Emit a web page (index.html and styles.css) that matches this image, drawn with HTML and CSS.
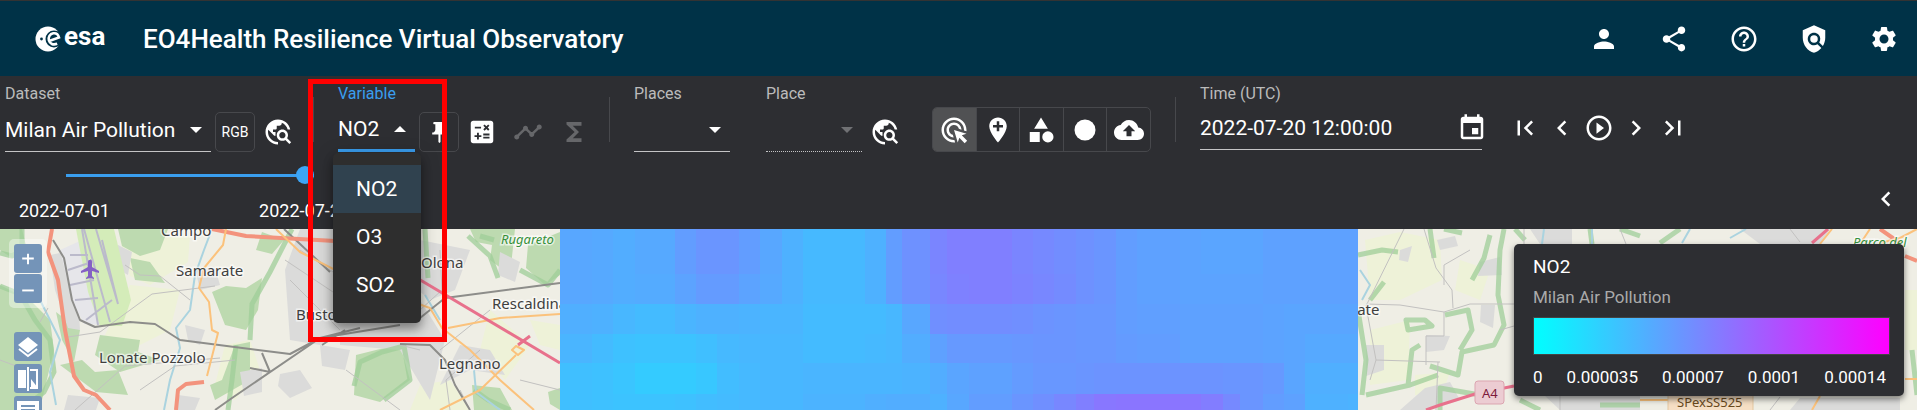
FILE: index.html
```html
<!DOCTYPE html>
<html lang="en">
<head>
  <meta charset="UTF-8" />
  <meta name="viewport" content="width=device-width, initial-scale=1.0"/>
  <title>EO4Health Resilience Virtual Observatory</title>
  <link rel="stylesheet" href="styles.css">
</head>
<body>
  <!-- icons -->
  <svg width="0" height="0" class="sprite" aria-hidden="true">
    <symbol id="i-globe" viewBox="0 0 24 24"><path d="M19.3 16.9c.4-.7.7-1.5.7-2.4 0-2.5-2-4.5-4.5-4.5S11 12 11 14.5s2 4.500 4.500 4.500c.9 0 1.700-.3 2.400-.7l3.200 3.200 1.400-1.400-3.200-3.200zm-3.800.1c-1.400 0-2.500-1.100-2.500-2.500s1.100-2.500 2.500-2.500 2.500 1.100 2.500 2.500-1.100 2.500-2.500 2.500zM12 20v2C6.480 22 2 17.520 2 12S6.480 2 12 2c4.840 0 8.870 3.440 9.800 8h-2.070c-.64-2.460-2.400-4.470-4.730-5.410V5c0 1.100-.9 2-2 2h-2v2c0 .55-.45 1-1 1H8v2h2v3H9l-4.790-4.790C4.080 10.790 4 11.380 4 12c0 4.410 3.590 8 8 8z"/></symbol>
    <symbol id="i-prev" viewBox="0 0 24 24"><path d="M15.410 7.410 14 6l-6 6 6 6 1.410-1.410L10.830 12z"/></symbol>
    <symbol id="i-next" viewBox="0 0 24 24"><path d="M10 6 8.590 7.410 13.170 12l-4.580 4.590L10 18l6-6z"/></symbol>
    <symbol id="i-first" viewBox="0 0 24 24"><path d="M18.410 16.590 13.820 12l4.590-4.590L17 6l-6 6 6 6zM6 6h2v12H6z"/></symbol>
    <symbol id="i-last" viewBox="0 0 24 24"><path d="M5.590 7.410 10.180 12l-4.590 4.590L7 18l6-6-6-6zM16 6h2v12h-2z"/></symbol>
  </svg>

  <header class="app-header">
    <svg class="logo" width="76" height="34" viewBox="0 -4 76 34" role="img" aria-label="esa">
      <circle cx="13" cy="13" r="12.500" fill="#fff"/>
      <circle cx="19" cy="13" r="8.500" fill="#003247"/>
      <path d="M13.500 15.200 24 11.500c-.8-3-3-4.700-5.800-4.200-3.400.6-5.200 3.900-4.300 7.200.9 3.400 4.200 4.700 8.300 3.300" fill="none" stroke="#fff" stroke-width="2.600"/>
      <circle cx="6.500" cy="13" r="1.400" fill="#003247"/>
      <text x="29" y="19" class="logo-text">esa</text>
    </svg>
    <h1>EO4Health Resilience Virtual Observatory</h1>
    <nav class="header-actions">
      <button aria-label="Account"><svg viewBox="0 0 24 24"><path d="M12 12c2.210 0 4-1.790 4-4s-1.790-4-4-4-4 1.790-4 4 1.790 4 4 4zm0 2c-2.670 0-8 1.340-8 4v2h16v-2c0-2.660-5.330-4-8-4z"/></svg></button>
      <button aria-label="Share"><svg viewBox="0 0 24 24"><path d="M18 16.080c-.76 0-1.440.3-1.960.77L8.910 12.700c.05-.23.090-.46.090-.7s-.04-.47-.09-.7l7.050-4.110c.54.5 1.250.81 2.040.81 1.660 0 3-1.340 3-3s-1.340-3-3-3-3 1.340-3 3c0 .24.040.47.090.7L8.040 9.810C7.500 9.310 6.790 9 6 9c-1.660 0-3 1.340-3 3s1.340 3 3 3c.79 0 1.500-.31 2.040-.81l7.120 4.160c-.05.21-.08.43-.08.650 0 1.610 1.310 2.920 2.920 2.920s2.920-1.310 2.920-2.920-1.310-2.920-2.920-2.920z"/></svg></button>
      <button aria-label="Help"><svg viewBox="0 0 24 24"><path d="M11 18h2v-2h-2v2zm1-16C6.480 2 2 6.480 2 12s4.480 10 10 10 10-4.480 10-10S17.520 2 12 2zm0 18c-4.410 0-8-3.590-8-8s3.590-8 8-8 8 3.590 8 8-3.590 8-8 8zm0-14c-2.210 0-4 1.790-4 4h2c0-1.100.9-2 2-2s2 .9 2 2c0 2-3 1.750-3 5h2c0-2.250 3-2.500 3-5 0-2.210-1.790-4-4-4z"/></svg></button>
      <button aria-label="Privacy"><svg viewBox="0 0 24 24"><path d="M21 5l-9-4-9 4v6c0 5.550 3.840 10.740 9 12 2.300-.56 4.330-1.900 5.880-3.710l-3.120-3.120c-1.940 1.290-4.580 1.070-6.290-.64-1.950-1.950-1.950-5.120 0-7.070 1.950-1.950 5.120-1.950 7.070 0 1.710 1.710 1.920 4.350.64 6.290l2.900 2.900C20.290 15.690 21 13.380 21 11V5z"/><circle cx="12" cy="12" r="3"/></svg></button>
      <button aria-label="Settings"><svg viewBox="0 0 24 24"><path d="M19.140 12.940c.04-.3.060-.61.060-.94 0-.32-.02-.64-.07-.94l2.030-1.580c.18-.14.230-.41.120-.61l-1.920-3.320c-.12-.22-.37-.29-.59-.22l-2.390.96c-.5-.38-1.030-.7-1.620-.94l-.36-2.540c-.04-.24-.24-.41-.48-.41h-3.840c-.24 0-.43.170-.47.410l-.36 2.540c-.59.240-1.130.570-1.620.940l-2.390-.96c-.22-.08-.47 0-.59.220L2.740 8.870c-.12.210-.08.470.12.610l2.030 1.580c-.05.300-.09.630-.09.940s.02.640.07.940l-2.030 1.580c-.18.140-.23.410-.12.610l1.920 3.320c.12.220.37.290.59.220l2.390-.96c.5.380 1.030.7 1.620.94l.36 2.540c.05.240.24.410.48.410h3.840c.24 0 .44-.17.47-.41l.36-2.540c.59-.24 1.130-.56 1.620-.94l2.390.96c.22.080.47 0 .59-.22l1.920-3.320c.12-.22.070-.47-.12-.61l-2.010-1.580zM12 15.600c-1.980 0-3.600-1.620-3.600-3.600s1.620-3.600 3.600-3.600 3.600 1.620 3.600 3.600-1.620 3.600-3.600 3.600z"/></svg></button>
    </nav>
  </header>

  <section class="controls">
    <div class="toolbar">
      <div class="field field-dataset">
        <label for="dataset">Dataset</label>
        <select id="dataset"><option>Milan Air Pollution</option></select>
      </div>
      <button class="framed">RGB</button>
      <button class="icon-btn" aria-label="Locate dataset"><svg><use href="#i-globe"/></svg></button>

      <span class="divider"></span>

      <div class="field field-variable">
        <label for="variable">Variable</label>
        <select id="variable"><option>NO2</option><option>O3</option><option>SO2</option></select>
        <ul class="menu" role="listbox" aria-label="Variable">
          <li role="option" aria-selected="true" class="selected">NO2</li>
          <li role="option" aria-selected="false">O3</li>
          <li role="option" aria-selected="false">SO2</li>
        </ul>
        <div class="highlight"></div>
      </div>
      <button class="framed" aria-label="Pin variable"><svg class="pin" viewBox="0 0 24 24"><path d="M16 9V4h1c.55 0 1-.45 1-1s-.45-1-1-1H7c-.55 0-1 .45-1 1s.45 1 1 1h1v5c0 1.660-1.340 3-3 3v2h5.970v7l1 1 1-1v-7H19v-2c-1.660 0-3-1.340-3-3z"/></svg></button>
      <button class="icon-btn" aria-label="Calculator"><svg viewBox="0 0 24 24"><path d="M19 3H5c-1.100 0-2 .9-2 2v14c0 1.100.9 2 2 2h14c1.100 0 2-.9 2-2V5c0-1.100-.9-2-2-2zm-5.970 4.060L14.090 6l1.410 1.410L16.910 6l1.060 1.060-1.410 1.410 1.410 1.410-1.060 1.060-1.410-1.400-1.410 1.410-1.060-1.060 1.410-1.410-1.410-1.420zM6.250 7.720h5v1.500h-5v-1.500zM11.500 16h-2v2H8v-2H6v-1.500h2v-2h1.500v2h2V16zm6.500 1.250h-5v-1.500h5v1.500zm0-2.500h-5v-1.500h5v1.500z"/></svg></button>
      <button class="icon-btn" aria-label="Time series" disabled><svg viewBox="0 0 24 24"><path d="M23 8c0 1.100-.9 2-2 2-.18 0-.35-.02-.51-.07l-3.560 3.550c.05.160.070.340.070.520 0 1.100-.9 2-2 2s-2-.9-2-2c0-.18.020-.36.070-.52l-2.550-2.550c-.16.050-.34.070-.52.070s-.36-.02-.52-.07l-4.550 4.560c.05.160.070.330.070.510 0 1.100-.9 2-2 2s-2-.9-2-2 .9-2 2-2c.18 0 .35.020.51.070l4.560-4.550C8.020 9.360 8 9.180 8 9c0-1.100.9-2 2-2s2 .9 2 2c0 .18-.02.360-.07.520l2.550 2.550c.16-.05.340-.07.520-.07s.36.020.52.070l3.550-3.560C19.020 8.350 19 8.180 19 8c0-1.100.9-2 2-2s2 .9 2 2z"/></svg></button>
      <button class="icon-btn" aria-label="Statistics" disabled><svg viewBox="0 0 24 24"><path d="M18 4H6v2l6.500 6L6 18v2h12v-3h-7l5-5-5-5h7z"/></svg></button>

      <span class="divider"></span>

      <div class="field field-place">
        <label for="places">Places</label>
        <select id="places"><option></option></select>
      </div>
      <div class="field field-place field-second">
        <label for="place">Place</label>
        <select id="place" disabled><option></option></select>
      </div>
      <button class="icon-btn" aria-label="Locate place"><svg><use href="#i-globe"/></svg></button>

      <div class="toggle-group">
        <button class="active" aria-label="Select"><svg viewBox="0 0 24 24"><path d="M11.710 17.990C8.530 17.840 6 15.220 6 12c0-3.310 2.690-6 6-6 3.220 0 5.840 2.530 5.990 5.710l-2.100-.63C15.480 9.310 13.890 8 12 8c-2.210 0-4 1.790-4 4 0 1.890 1.310 3.480 3.080 3.890l.63 2.100zM22 12c0 .3-.01.600-.04.900l-1.970-.59c.01-.1.010-.21.010-.31 0-4.420-3.580-8-8-8s-8 3.580-8 8 3.580 8 8 8c.1 0 .21 0 .31-.01l.59 1.970c-.3.030-.6.040-.9.040-5.520 0-10-4.480-10-10S6.480 2 12 2s10 4.480 10 10zm-3.770 4.260L22 15l-10-3 3 10 1.260-3.770 4.270 4.270 1.980-1.980-4.280-4.260z"/></svg></button>
        <button aria-label="Draw point"><svg viewBox="0 0 24 24"><path d="M12 2C8.140 2 5 5.140 5 9c0 5.250 7 13 7 13s7-7.750 7-13c0-3.860-3.140-7-7-7zm4 8h-3v3h-2v-3H8V8h3V5h2v3h3v2z"/></svg></button>
        <button aria-label="Draw polygon"><svg viewBox="0 0 24 24"><path d="M12 2 6.500 11h11zM3 13.500h8v8H3z"/><circle cx="17.500" cy="17.500" r="4.500"/></svg></button>
        <button aria-label="Draw circle"><svg viewBox="0 0 24 24"><circle cx="12" cy="12" r="8.400"/></svg></button>
        <button aria-label="Upload"><svg viewBox="0 0 24 24"><path d="M19.350 10.040C18.670 6.590 15.640 4 12 4 9.110 4 6.600 5.640 5.350 8.040 2.340 8.360 0 10.910 0 14c0 3.310 2.690 6 6 6h13c2.760 0 5-2.240 5-5 0-2.640-2.050-4.780-4.650-4.960zM14 13v4h-4v-4H7l5-5 5 5h-3z"/></svg></button>
      </div>

      <span class="divider divider-time"></span>

      <div class="field field-time">
        <label for="time">Time (UTC)</label>
        <div class="time-box">
          <input id="time" type="text" value="2022-07-20 12:00:00">
          <button aria-label="Choose date"><svg viewBox="0 0 24 24"><path d="M17 12h-5v5h5v-5zM16 1v2H8V1H6v2H5c-1.110 0-1.990.9-1.990 2L3 19c0 1.100.89 2 2 2h14c1.100 0 2-.9 2-2V5c0-1.100-.9-2-2-2h-1V1h-2zm3 18H5V8h14v11z"/></svg></button>
        </div>
      </div>
      <div class="player">
        <button aria-label="First"><svg><use href="#i-first"/></svg></button>
        <button aria-label="Previous"><svg><use href="#i-prev"/></svg></button>
        <button aria-label="Play"><svg viewBox="0 0 24 24"><path d="m10 16.500 6-4.500-6-4.500v9zM12 2C6.480 2 2 6.480 2 12s4.480 10 10 10 10-4.480 10-10S17.520 2 12 2zm0 18c-4.410 0-8-3.590-8-8s3.590-8 8-8 8 3.590 8 8-3.590 8-8 8z"/></svg></button>
        <button aria-label="Next"><svg><use href="#i-next"/></svg></button>
        <button aria-label="Last"><svg><use href="#i-last"/></svg></button>
      </div>
    </div>

    <div class="timeline">
      <div class="slider">
        <input type="range" min="0" max="19" value="19" aria-label="Time range">
        <div class="marks"><span>2022-07-01</span><span>2022-07-20</span></div>
      </div>
      <button class="collapse" aria-label="Show sidebar"><svg><use href="#i-prev"/></svg></button>
    </div>
  </section>

  <main class="map">
    <svg class="map-canvas" viewBox="0 229 1917 181" preserveAspectRatio="xMinYMin slice">
      <g class="fields">
        <path d="M0 290 40 300 50 350 40 410H0zM120 240 190 236 188 262 150 285 130 276zM130 285 180 290 170 330 130 350 100 345zM225 345 250 340 260 370 235 400 215 385zM380 290 410 300 400 320 378 312zM490 310 530 345 505 380 480 350zM530 320 560 325V350L540 345zM420 385 450 380 470 410H410z"/>
        <path d="M1365 240 1400 232 1440 240 1442 280 1400 300 1370 300zM1370 330 1410 320 1408 380 1370 385zM1460 260 1490 270 1480 300 1455 290zM1415 375 1450 372 1440 400 1415 395zM1905 290H1917V350H1905z"/>
      </g>
      <g class="forest">
        <path d="M0 229H22L28 254 12 258 0 250zM118 229H168L160 250 140 256 122 246zM212 292 226 286 246 288 262 278 258 310 246 330 225 325zM0 285 30 300 50 320 54 350 42 400 18 410H0zM100 335 140 340 138 352 160 360 120 372 95 355zM60 365 82 360 95 372 118 370 128 395 96 392 80 380zM235 345 250 342 250 380 215 400 210 385 222 380zM130 258 150 262 165 283 135 280zM262 232 284 240 272 254 256 250zM56 312 80 330 74 362 62 340z"/>
        <path d="M356 355 400 344 410 380 380 402 354 395zM470 229H515L510 275 490 260 492 245 476 242zM528 245 560 232V275L545 285 526 268zM472 385 500 388 512 410H474zM548 392 560 388V410L550 404z"/>
      </g>
      <g class="urban">
        <path d="M50 255 75 250 80 330 68 328 55 290zM195 268 215 268 220 285 200 290zM185 325 205 330 200 345 188 340zM280 374 300 370 312 388 290 398 278 386zM178 395 200 398 195 410H174zM300 229H345V330L320 345 290 340 285 270zM118 245 132 252 128 275 116 268zM420 240 470 250 455 290 430 300 412 285zM500 252 520 262 515 282 498 275zM340 325 420 300 445 340 430 400 400 350 340 345zM440 385 470 370 505 375 490 350 460 345zM320 345 350 350 345 370 322 366zM68 395 100 398 96 410H64zM240 372 262 368 262 392 244 396z"/>
        <path d="M1480 262 1500 257 1502 275 1478 276zM1481 305 1495 305 1493 328 1480 322zM1366 345 1384 345 1384 370 1366 376zM1426 335 1450 336 1444 350 1426 352zM1400 250 1412 246 1408 262 1399 260zM1437 240 1455 236 1458 246 1440 250zM1425 388 1450 382 1460 400 1430 410H1400zM1530 229H1572V244H1540zM1740 229H1830L1820 244H1760zM1545 396H1640V410H1560zM1800 398H1900V410H1790z"/>
      </g>
      <g class="airport">
        <path class="ground" d="M60 250 82 240 96 300 104 325 84 324 72 300z"/>
        <path class="grass" d="M76 229H114L131 300 122 326H100L88 292z"/>
        <path d="M82 229 98 325M96 229 118 304M84 229 110 322M112 300 86 320M70 255H88M68 270 92 262M70 285 94 280M75 300 98 298M102 240 118 304"/>
        <path class="plane" d="M90 260c1-1 2 0 2 2v5l7 4v2l-7-2v5l2 2v1l-4-1-4 1v-1l2-2v-5l-7 2v-2l7-4v-5c0-2 1-2 2-2z"/>
      </g>
      <g class="woods-edge">
        <path d="M22 229V250L12 256 0 253M0 286 20 294 35 320 50 340 54 372 44 392 34 400M292 229 270 272 252 304 250 340M236 345 232 380 228 410"/>
        <path d="M354 386 360 362 382 352 404 346 410 380 384 400M468 236 490 256 498 278M494 240 480 236M520 270 548 285 560 270M474 390 488 400 510 410M425 229 428 278"/>
        <path d="M1358 255 1382 250 1398 252M1370 300 1384 282M1358 310 1366 360 1362 395M1430 229 1434 258M1444 229 1462 233M1504 229 1500 250 1498 295 1504 325 1494 345 1462 352 1458 375 1430 366M1472 280 1484 258 1490 235M1406 320 1425 320 1432 326 1408 330zM1408 385 1412 350 1420 345M1366 395 1410 385 1438 375M1445 315 1468 310 1472 330 1460 350M1440 410V388L1480 395"/>
        <path d="M1515 229 1525 240M1590 229 1592 244M1620 229 1640 236M1680 229 1660 243M1912 350 1917 395M1520 400 1540 410M1600 405H1640"/>
      </g>
      <g class="river">
        <path d="M212 229 204 250 195 275 190 310 176 328 180 348 170 380 164 410M40 300 60 340 50 372 56 405M425 295 440 320M474 370 476 392 500 410M1360 270 1370 285 1362 300M1544 229 1542 244M1592 229V244M1690 229 1682 243M1730 238 1746 229"/>
      </g>
      <g class="street">
        <path d="M48 308 40 322M68 337 100 332 152 294 215 286M125 265 140 275 160 276 190 300M75 410 125 366 220 358M140 390 175 366 235 360M0 360 40 375M285 260 345 300M290 280 340 330M300 250 345 280M440 250 442 290 420 310M450 410 446 380 480 350M346 370 400 410M400 345 420 350M490 310 440 350M470 410 460 390M520 380 560 390"/>
        <path d="M1404 229 1366 306 1376 360 1440 362M1424 229 1436 268 1452 290 1453 308M1366 304 1400 305 1444 312 1470 304H1514M1444 312V336H1426V365M1438 362 1436 410M1470 250 1444 265V285M1500 330 1514 326M1376 360 1370 380M1524 229V244M1620 229 1626 244M1790 229 1800 242M1560 396V410M1780 397 1770 410"/>
      </g>
      <g class="rail">
        <path d="M53 240 64 258 72 300 80 320 95 327 130 322 155 324 180 340 290 354 320 338 360 328 M215 410 232 398 320 338M284 229 330 272M330 320 420 303 M320 338 400 325M420 318 445 298 560 283M400 344 430 345 445 360 455 385 470 410M322 345 345 330M262 353 270 372 250 368"/>
      </g>
      <g class="primary">
        <path d="M52 229 48 252 58 280 65 330 74 376 84 390 96 395 110 410M212 229 246 236 335 241M176 410 178 390 186 384 204 382M1880 229 1900 243M1905 256 1917 261"/>
      </g>
      <g class="secondary">
        <path d="M226 229 223 245 204 268 199 288 209 302 212 330 218 333 207 376M276 229 300 252 345 275M410 301 430 308 442 328 470 350 500 380 534 410M448 328 500 318 560 314M440 410 480 390 516 355M516 346 524 350 518 355 512 350zM1820 244 1832 229M1880 243 1900 238 1917 229M1905 379H1917M1640 400H1680M1812 410 1820 396M1870 229 1860 244"/>
      </g>
      <g class="motorway">
        <path d="M400 267 422 281 560 363M518 345 530 336M1426 410 1440 405 1475 394 1514 386M1812 243 1828 229"/>
      </g>
      <g class="place">
        <text x="161" y="236">Campo</text>
        <text x="176" y="276">Samarate</text>
        <text x="99" y="363">Lonate Pozzolo</text>
        <text x="296" y="320">Busto</text>
        <text x="421" y="268">Olona</text>
        <text x="492" y="309">Rescaldina</text>
        <text x="439" y="369">Legnano</text>
        <text x="1350" y="315">cate</text>
        <text x="501" y="244" class="park">Rugareto</text>
        <text x="1853" y="247" class="park">Parco del</text>
      </g>
      <g class="shield">
        <rect x="1475" y="381" width="29" height="23" rx="3"/>
        <text x="1482" y="398">A4</text>
        <rect x="1668" y="392" width="85" height="22" class="road-sp"/>
        <text x="1677" y="407" class="road-sp-text">SPexSS525</text>
      </g>
      <g id="raster" shape-rendering="crispEdges"></g>
    </svg>

    <div class="map-tools">
      <div class="zoom">
        <button aria-label="Zoom in"><svg viewBox="0 0 28 29"><path d="M14 9v11M8 14h12"/></svg></button>
        <button aria-label="Zoom out"><svg viewBox="0 0 28 29"><path d="M8 16h12"/></svg></button>
      </div>
      <button aria-label="Layers"><svg viewBox="0 0 28 28"><path class="solid" d="m14 4 10 8-10 8-10-8z"/><path class="thin" d="m5 16 9 7 9-7"/></svg></button>
      <button aria-label="Compare"><svg viewBox="0 0 28 28"><path class="solid" d="M4 5h8v18H4zM17 23V14l7 9z"/><path class="thin" d="M14 2v24M16 5h7v18h-7"/></svg></button>
      <button aria-label="Info"><svg viewBox="0 0 28 28"><path class="solid" d="M3 4h22v20H3z"/><path class="lines" d="M7 9h14M7 13h14M7 17h14"/></svg></button>
    </div>

    <aside class="legend">
      <h2>NO2</h2>
      <p>Milan Air Pollution</p>
      <div class="colorbar"></div>
      <div class="ticks"><span>0</span><span>0.000035</span><span>0.00007</span><span>0.0001</span><span>0.00014</span></div>
    </aside>
  </main>

  <script>
    // grid cell edges in map units
    const xs = [560,592,613,635,675,696,717,739,760,782,803,865,886,902,930,947,969,1012,1033,1054,1076,1094,1116,1137,1180,1201,1223,1240,1263,1284,1305,1348,1358];
    const ys = [229,274,304,334,363,394,410];
    // values on the cool colormap, 0..255
    const rows = [
      [88,86,82,86,98,106,106,98,88,78,70,78,98,110,122,128,128,122,118,114,110,106,98,94,92,90,90,90,94,94,94,94],
      [88,86,82,84,92,100,100,92,86,78,70,78,98,110,120,126,128,124,120,116,110,106,98,94,92,92,92,92,94,94,94,94],
      [80,78,72,68,74,78,78,76,74,74,68,68,72,88,112,114,114,112,108,106,104,104,98,96,94,94,94,94,92,90,90,90],
      [74,68,62,60,60,64,70,72,72,72,68,70,72,82,94,102,102,104,106,106,104,104,100,98,94,94,94,94,92,90,86,86],
      [64,62,58,52,52,56,66,70,72,72,74,74,74,76,82,90,94,100,104,104,106,108,108,108,108,108,106,106,102,90,80,80],
      [64,62,60,60,62,66,68,70,72,72,76,80,82,82,78,88,98,106,112,120,128,136,138,138,136,130,118,106,98,94,78,76]
    ];
    const raster = document.getElementById('raster');

    rows.forEach((row, j) => {
      row.forEach((v, i) => {
        const cell = document.createElementNS('http://www.w3.org/2000/svg', 'rect');
        cell.setAttribute('x', xs[i]);
        cell.setAttribute('y', ys[j]);
        cell.setAttribute('width', xs[i + 1] - xs[i]);
        cell.setAttribute('height', ys[j + 1] - ys[j]);
        cell.setAttribute('fill', `rgb(${v}, ${255 - v}, 255)`);
        raster.appendChild(cell);
      });
    });
  </script>
</body>
</html>
```
FILE: styles.css
```css
* {
  box-sizing: border-box;
}
body {
  margin: 0;
  height: 100vh;
  display: flex;
  flex-direction: column;
  overflow: hidden;
  background-color: #2d2e32;
  color: #fff;
  font-family: Roboto, sans-serif;
}
button {
  display: flex;
  align-items: center;
  justify-content: center;
  padding: 0;
  border: none;
  background: none;
  color: #fff;
  font-family: inherit;
  cursor: pointer;
}
button svg {
  width: 30px;
  height: 30px;
  fill: currentColor;
}
button:disabled {
  color: #66676a;
}
.sprite {
  position: absolute;
}

/* header */
.app-header {
  display: flex;
  align-items: center;
  height: 76px;
  padding: 0 8px 0 35px;
  border-top: 1px solid #333;
  background-color: #003247;
}
.logo-text {
  font: bold 26px Roboto, sans-serif;
  fill: #fff;
}
.app-header h1 {
  flex: 1;
  margin: 0 0 0 32px;
  font-size: 26px;
  font-weight: 500;
}
.header-actions {
  display: flex;
  gap: 20px;
}
.header-actions button {
  width: 50px;
  height: 50px;
}

/* control bar */
.controls {
  position: relative;
  z-index: 2;
  background-color: #2d2e32;
}
.toolbar {
  display: flex;
  align-items: flex-end;
  padding: 9px 5px 0;
}
.field {
  position: relative;
  display: flex;
  flex-direction: column;
  gap: 6px;
}
.field label {
  font-size: 16px;
  line-height: 18px;
  color: #bbb;
}
.field select {
  height: 43px;
  width: 100%;
  padding: 0;
  border: none;
  border-bottom: 1px solid #c4c4c6;
  border-radius: 0;
  appearance: none;
  background: url("data:image/svg+xml,%3Csvg xmlns='http://www.w3.org/2000/svg' width='12' height='7'%3E%3Cpath d='M0 0h12L6 6z' fill='%23fff'/%3E%3C/svg%3E") no-repeat right 9px center;
  color: #fff;
  font: 21px Roboto, sans-serif;
}
.field select:disabled {
  border-bottom-style: dotted;
  background-image: url("data:image/svg+xml,%3Csvg xmlns='http://www.w3.org/2000/svg' width='12' height='7'%3E%3Cpath d='M0 0h12L6 6z' fill='%23707174'/%3E%3C/svg%3E");
  opacity: 1;
}
.field-dataset {
  width: 206px;
}
.field-variable {
  width: 77px;
}
.field-place {
  width: 96px;
}
.field-second {
  margin-left: 36px;
}
.field-variable label {
  color: #3a9eee;
}
.field-variable select {
  border-bottom: 3px solid #3a9eee;
  background-image: url("data:image/svg+xml,%3Csvg xmlns='http://www.w3.org/2000/svg' width='12' height='7'%3E%3Cpath d='M0 6h12L6 0z' fill='%23fff'/%3E%3C/svg%3E");
}
.framed {
  width: 40px;
  height: 40px;
  margin-left: 4px;
  border: 1px solid #47484c;
  border-radius: 5px;
  font-size: 14px;
}
.framed .pin {
  width: 25px;
  height: 25px;
}
.icon-btn {
  width: 46px;
  height: 40px;
}
.divider {
  width: 1px;
  height: 45px;
  margin: 0 24px 10px 12px;
  background-color: #47484c;
}
.toggle-group {
  display: flex;
  width: 219px;
  margin-left: 24px;
  border: 1px solid #47484c;
  border-radius: 5px;
  overflow: hidden;
}
.toggle-group button {
  flex: 1;
  height: 43px;
}
.toggle-group button + button {
  border-left: 1px solid #47484c;
}
.toggle-group .active {
  background-color: #505153;
}
.divider-time {
  margin-left: 24px;
}
.field-time {
  width: 282px;
  gap: 3px;
  padding-bottom: 2px;
}
.time-box {
  display: flex;
  align-items: center;
  height: 44px;
  border-bottom: 1px solid #c4c4c6;
}
.time-box input {
  flex: 1;
  min-width: 0;
  padding: 0;
  border: none;
  outline: none;
  background: none;
  color: #fff;
  font: 21px Roboto, sans-serif;
}
.time-box button {
  margin-right: -5px;
}
.player {
  display: flex;
  margin-left: 24px;
}
.player button {
  width: 37px;
  height: 48px;
}

/* menu */
.menu {
  position: absolute;
  top: 68px;
  left: -5px;
  width: 88px;
  margin: 0;
  padding: 12px 0 14px;
  border-radius: 5px;
  background-color: #2e2e2e;
  box-shadow: 0 6px 10px rgba(0, 0, 0, 0.3), 0 3px 18px rgba(0, 0, 0, 0.25);
  list-style: none;
  font-size: 21px;
}
.menu li {
  padding: 0 23px;
  line-height: 48px;
}
.menu .selected {
  background-color: #30424f;
}
.highlight {
  position: absolute;
  top: -6px;
  left: -30px;
  width: 139px;
  height: 263px;
  border: 5px solid #f00;
  pointer-events: none;
}

/* time slider */
.timeline {
  display: flex;
  align-items: flex-start;
  justify-content: space-between;
  height: 77px;
  padding: 14px 16px 0 19px;
}
.slider {
  width: 331px;
}
.slider input {
  display: block;
  width: 248px;
  height: 18px;
  margin: 0 0 0 47px;
  appearance: none;
  background: linear-gradient(#3a9eee, #3a9eee) no-repeat center / 100% 3px;
}
.slider input::-webkit-slider-thumb {
  width: 18px;
  height: 18px;
  border-radius: 50%;
  appearance: none;
  background-color: #3ca5f6;
}
.marks {
  display: flex;
  justify-content: space-between;
  margin-top: 16px;
  font-size: 18px;
  line-height: 22px;
}
.collapse {
  margin-top: 18px;
}

/* map */
.map {
  position: relative;
  flex: 1;
  min-height: 0;
  overflow: hidden;
  background-color: #efeee5;
}
.map-canvas {
  display: block;
  width: 100%;
  height: 100%;
}
.map-canvas path {
  stroke-linejoin: round;
}
.fields path {
  fill: #eef2d8;
}
.forest path {
  fill: #bddab0;
}
.urban path {
  fill: #dbdbda;
}
.airport path {
  fill: none;
  stroke: #bbbacb;
  stroke-width: 2px;
}
.airport .ground {
  fill: #e6e6ea;
  stroke: none;
}
.airport .grass {
  fill: #d4ecb9;
  stroke: none;
}
.airport .plane {
  fill: #8461c4;
  stroke: none;
}
.woods-edge path {
  fill: none;
  stroke: #9fce98;
  stroke-width: 5px;
  opacity: 0.75;
}
.river path {
  fill: none;
  stroke: #aad3df;
  stroke-width: 2px;
}
.street path {
  fill: none;
  stroke: #c2c1c0;
  stroke-width: 1px;
}
.rail path {
  fill: none;
  stroke: #8d8d8a;
  stroke-width: 2px;
}
.primary path {
  fill: none;
  stroke: #f3937d;
  stroke-width: 4px;
}
.secondary path {
  fill: none;
  stroke: #fbc27c;
  stroke-width: 2px;
}
.motorway path {
  fill: none;
  stroke: #e8718c;
  stroke-width: 3px;
}
.place text {
  font: 15px "Noto Sans", sans-serif;
  fill: #3f3f3f;
  stroke: rgba(255, 255, 255, 0.6);
  stroke-width: 3px;
  paint-order: stroke;
}
.place .park {
  font-size: 13px;
  font-style: italic;
  fill: #35903a;
}
.shield rect {
  fill: #ecccd2;
  stroke: #dba5b0;
  stroke-width: 1px;
}
.shield text {
  font: 13px "Noto Sans", sans-serif;
  fill: #7d1a3b;
}
.shield .road-sp {
  fill: #f6dfc4;
  stroke: #e4c7a1;
}
.shield .road-sp-text {
  fill: #6a4a1d;
}
.map-tools {
  position: absolute;
  top: 10px;
  left: 9px;
  display: flex;
  flex-direction: column;
  gap: 3px;
}
.map-tools button {
  width: 28px;
  height: 29px;
  margin-left: 5px;
  border-radius: 3px;
  background-color: #7494b8;
}
.map-tools svg {
  width: 28px;
  height: 28px;
  fill: none;
  stroke: #fff;
  stroke-width: 2px;
}
.map-tools .solid {
  fill: #fff;
  stroke: none;
}
.map-tools .lines {
  stroke: #7494b8;
}
.zoom {
  display: flex;
  flex-direction: column;
  gap: 1px;
  margin-bottom: 21px;
  padding: 5px;
  border-radius: 5px;
  background-color: rgba(255, 255, 255, 0.4);
}
.zoom button {
  margin-left: 0;
}
.legend {
  position: absolute;
  top: 15px;
  right: 13px;
  width: 390px;
  padding: 13px 14px 9px 19px;
  border-radius: 5px;
  background-color: #2d2e32;
  box-shadow: 0 3px 6px rgba(0, 0, 0, 0.5);
}
.legend h2 {
  margin: 0;
  font-size: 19px;
  font-weight: 400;
  line-height: 20px;
}
.legend p {
  margin: 11px 0;
  font-size: 17px;
  line-height: 18px;
  color: #aaa;
}
.colorbar {
  height: 38px;
  border: 1px solid #444;
  background: linear-gradient(to right, #0ff, #f0f);
}
.ticks {
  display: flex;
  justify-content: space-between;
  margin: 12px 4px 0 0;
  font-size: 17px;
  line-height: 20px;
}
```
